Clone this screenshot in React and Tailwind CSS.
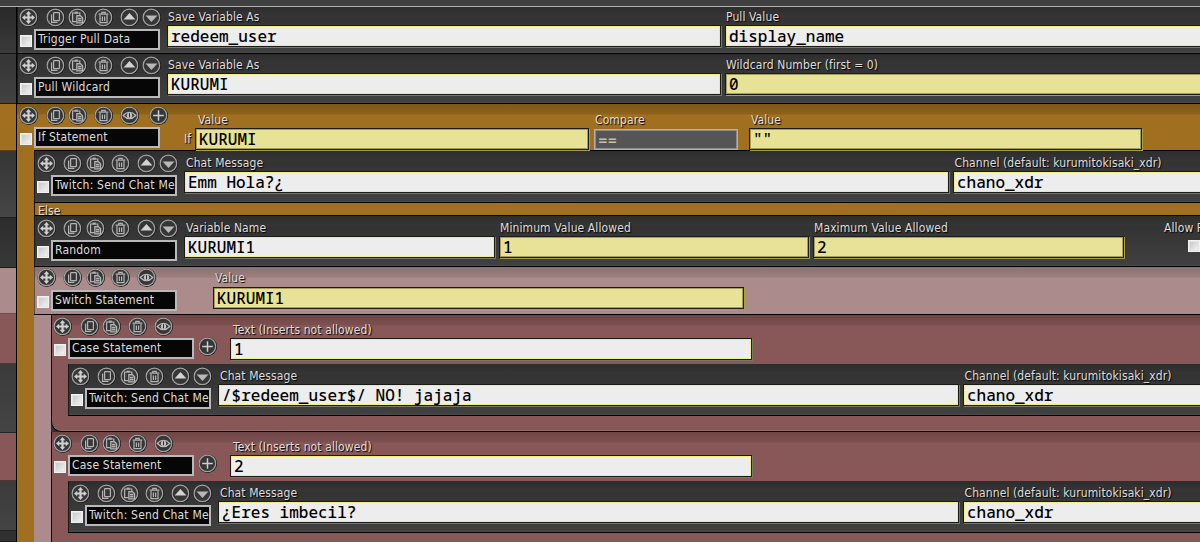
import clsx from 'clsx';

const gutter = [
  'h-[47px] bg-gradient-to-b from-[#292929] to-[#3a3a3a]',
  'h-[50px] bg-gradient-to-b from-[#353535] to-[#424242]',
  'h-[47px] bg-[#a07020]',
  'h-[67px] bg-gradient-to-b from-[#353535] to-[#464646]',
  'h-[50px] bg-gradient-to-b from-[#2c2c2c] to-[#383838]',
  'h-[46px] bg-[#ab8b8b]',
  'h-[50px] bg-[#885858]',
  'h-[69px] bg-gradient-to-b from-[#3b3b3b] to-[#444444]',
  'h-[48px] bg-[#885858]',
  'h-[50px] bg-gradient-to-b from-[#3b3b3b] to-[#444444]',
  'h-[11px] bg-[#303030]',
];

const glyphs = {
  move: (
    <path
      d="M9.5 3 12.3 6.2H10.6V8.4H12.8V6.7L16 9.5 12.8 12.3V10.6H10.6V12.8H12.3L9.5 16 6.7 12.8H8.4V10.6H6.2V12.3L3 9.5 6.2 6.7V8.4H8.4V6.2H6.7Z"
      fill="#d0d0d0"
    />
  ),
  copy: (
    <g fill="none" stroke="#b4b4b4" strokeWidth="1.2">
      <rect x="7.6" y="4.6" width="5.8" height="8" rx=".6" />
      <path d="M5.6 6.6V14.4H11.4" />
    </g>
  ),
  paste: (
    <g fill="none" stroke="#b4b4b4" strokeWidth="1.2">
      <path d="M8.4 13.6H4.6V5H11.8V7.2" />
      <path d="M6.6 4.6H9.8" strokeWidth="2" />
      <path d="M8.8 7.6H12.4L14.6 9.8V14.8H8.8Z" fill="#555" />
      <path d="M10 10.6H13.4M10 12.7H13.4" />
    </g>
  ),
  trash: (
    <g fill="none" stroke="#b4b4b4" strokeWidth="1.2">
      <path d="M4.6 6.2H14.4M7.8 6V4.4H11.2V6" />
      <path d="M6 6.8V14.6H13V6.8M8.4 8.4V13M10.6 8.4V13" />
    </g>
  ),
  up: <path d="M9.5 5 15.4 11.4H3.6Z" fill="#d2d2d2" />,
  down: <path d="M3.6 7.6H15.4L9.5 14Z" fill="#b8b8b8" />,
  eye: (
    <g>
      <path d="M3.2 9.5Q9.5 3 15.8 9.5 9.5 16 3.2 9.5Z" fill="none" stroke="#c0c0c0" strokeWidth="1.2" />
      <circle cx="9.5" cy="9.5" r="2.7" fill="#c4c4c4" />
      <path d="M9.5 7.2V11.4" stroke="#333" strokeWidth="1.1" />
    </g>
  ),
  plus: <path d="M9.5 4.2V14.8M4.2 9.5H14.8" stroke="#cfcfcf" strokeWidth="1.5" />,
};

const RoundIcon = ({ name, className }) => (
  <svg viewBox="0 0 19 19" className={clsx('h-[19px] w-[19px] shrink-0', className)}>
    <circle cx="9.7" cy="9.7" r="9.3" fill="#121212" />
    <circle cx="9.4" cy="9.4" r="8.3" fill="#363636" stroke="#a4a4a4" strokeWidth="1.2" />
    {glyphs[name]}
  </svg>
);

const Checkbox = ({ className }) => (
  <span
    className={clsx(
      'h-[12px] w-[12px] shrink-0 border border-[#f2f2f2] bg-gradient-to-br from-[#c2c6ca] to-[#f6f6f6] shadow-[inset_0_0_0_1px_#e4e4e4]',
      className,
    )}
  />
);

const Controls = ({ name, tools = 'arrows', className = 'pt-[3px]', boxGap = 'mt-[2px]', inset = 'pl-[2px]' }) => (
  <div className={clsx('flex w-[144px] shrink-0 flex-col', className)}>
    <div className={clsx('flex', inset)}>
      <RoundIcon name="move" />
      <RoundIcon name="copy" className="ml-[7.5px]" />
      <RoundIcon name="paste" className="ml-[3.5px]" />
      <RoundIcon name="trash" className="ml-[6.5px]" />
      <RoundIcon name={tools === 'arrows' ? 'up' : 'eye'} className="ml-[7px]" />
      {tools === 'arrows' && <RoundIcon name="down" className="ml-[3px]" />}
      {tools === 'eyePlus' && <RoundIcon name="plus" className="ml-[10px]" />}
    </div>
    <div className={clsx('flex pl-[3px]', boxGap)}>
      <Checkbox className="mt-[6px]" />
      <div className="ml-[2px] h-[21px] w-[126px] shrink-0 overflow-hidden border-2 border-[#b9b9b9] bg-[#060606] pl-[2px] text-[12px] leading-[16px] tracking-[0.2px] whitespace-nowrap text-[#dcdcdc]">
        {name}
      </div>
    </div>
  </div>
);

const boxStyles = {
  white: 'border-[#1c1c14] bg-[#ededed] text-black shadow-[inset_0_0_0_1px_#eeee84,1px_1px_0_#777777]',
  yellow: 'border-[#1c1c14] bg-[#e8e297] text-black shadow-[inset_0_0_0_1px_#a49e60,1px_1px_0_#a6a04c]',
  gray: 'border-[#b0b0b0] bg-[#555555] text-[#c8c0a4] shadow-[inset_0_0_0_1px_#8c8c8c]',
};

const Label = ({ children, className }) => (
  <div
    className={clsx(
      'h-[16px] text-[12px] leading-[16px] tracking-[0.1px] whitespace-nowrap text-[#dedede] [text-shadow:1px_1px_1px_#000]',
      className,
    )}
  >
    {children}
  </div>
);

const Field = ({ label, value, kind = 'white', width, className, gap = 'mt-0', labelPad = 'pl-[1px]' }) => (
  <div className={clsx('flex shrink-0 flex-col', width, className)}>
    <Label className={labelPad}>{label}</Label>
    <div
      className={clsx(
        'h-[22px] overflow-hidden border pl-[3px] font-[Noto_Sans_Mono,DejaVu_Sans_Mono,monospace] text-[16px] leading-[21px] font-medium whitespace-pre',
        boxStyles[kind],
        gap,
      )}
    >
      {value}
    </div>
  </div>
);

const darkRow =
  'border-b border-black bg-[linear-gradient(#2d2d2d,#363636_10px,#333333_11px,#414141)] shadow-[inset_1px_0_0_#191919,inset_0_-1px_0_#4a4a4a]';

const ChatRow = ({ message, messageWidth }) => (
  <div className={clsx('flex h-[52px]', darkRow)}>
    <Controls name="Twitch: Send Chat Me" inset="pl-[2.5px]" />
    <Field
      label="Chat Message"
      value={message}
      width={messageWidth}
      className="ml-[6px] pt-[4px]"
      labelPad="pl-[2px]"
    />
    <Field
      label="Channel (default: kurumitokisaki_xdr)"
      value="chano_xdr"
      width="w-[400px]"
      className="ml-[4px] pt-[4px]"
      labelPad="pl-[1.5px]"
    />
  </div>
);

const CaseBlock = ({ value, message, className }) => (
  <div
    className={clsx(
      'border-b border-l border-black bg-[#885858] bg-[linear-gradient(#6d4646,#7d5050_10px,#885858_11px)] shadow-[inset_0_-1px_0_#9a6868]',
      className,
    )}
  >
    <div className="-ml-px flex h-[49px]">
      <Controls name="Case Statement" tools="eye" className="pt-[2px]" />
      <RoundIcon name="plus" className="mt-[22px] ml-[3px]" />
      <Field
        label="Text (Inserts not allowed)"
        value={value}
        width="w-[522px]"
        className="ml-[13px] pt-[7px]"
        labelPad="pl-[3px]"
      />
    </div>
    <div className="pl-[16px]">
      <ChatRow message={message} messageWidth="w-[741px]" />
    </div>
  </div>
);

const SwitchBlock = () => (
  <div className="bg-[#ab8b8b] bg-[linear-gradient(#8b7171,#9b7f7f_10px,#ab8b8b_11px)] shadow-[inset_1px_0_0_#5e4c4c]">
    <div className="flex h-[47px]">
      <Controls name="Switch Statement" tools="eye" className="pt-[1px]" boxGap="mt-[3px]" inset="pl-[2.5px]" />
      <Field
        label="Value"
        value="KURUMI1"
        kind="yellow"
        width="w-[531px]"
        className="ml-[35px] pt-[3px]"
        gap="mt-[1px]"
        labelPad="pl-[2px]"
      />
    </div>
    <div className="border-t border-black bg-[#ab8b8b] pl-[17px]">
      <div className="bg-[#303030]">
        <CaseBlock value="1" message="/$redeem_user$/ NO! jajaja" className="h-[117px] rounded-bl-[10px]" />
        <CaseBlock value="2" message="¿Eres imbecil?" className="h-[130px]" />
      </div>
    </div>
  </div>
);

const IfBlock = () => (
  <div className="bg-[#a07020] bg-[linear-gradient(#7f5815,#8d631b_10px,#a07020_11px)]">
    <div className="flex h-[46px]">
      <Controls name="If Statement" tools="eyePlus" className="pt-[2px]" />
      <Label className="mt-[27px] ml-[23px] w-[11px]">If</Label>
      <Field label="Value" value="KURUMI" kind="yellow" width="w-[394px]" className="pt-[8px]" labelPad="pl-[3px]" />
      <Field label="Compare" value="==" kind="gray" width="w-[144px]" className="ml-[5px] pt-[8px]" gap="mt-[1px]" />
      <Field label="Value" value={'""'} kind="yellow" width="w-[393px]" className="ml-[11px] pt-[8px]" labelPad="pl-[2px]" />
    </div>
    <div className="ml-[17px] border-l border-[#1a1206]">
      <div className="-ml-px border-t border-black">
        <ChatRow message="Emm Hola?¿" messageWidth="w-[765px]" />
      </div>
      <div className="h-[13px] border-b border-black pl-[3px]">
        <Label>Else</Label>
      </div>
      <div className={clsx('-ml-px flex h-[51px]', darkRow)}>
        <Controls name="Random" inset="pl-[2.5px]" />
        <Field
          label="Variable Name"
          value="KURUMI1"
          width="w-[311px]"
          className="ml-[6px] pt-[4px]"
          labelPad="pl-[2px]"
        />
        <Field label="Minimum Value Allowed" value="1" kind="yellow" width="w-[310px]" className="ml-[4px] pt-[4px]" />
        <Field label="Maximum Value Allowed" value="2" kind="yellow" width="w-[311px]" className="ml-[4px] pt-[4px]" />
        <div className="ml-[39px] w-[70px] shrink-0 pt-[4px]">
          <Label className="pl-[1px]">Allow Repeats</Label>
          <Checkbox className="mt-[4px] ml-[25px] block" />
        </div>
      </div>
      <div className="-ml-px">
        <SwitchBlock />
      </div>
    </div>
  </div>
);

const App = () => (
  <div className="h-[542px] w-[1200px] overflow-hidden bg-[#3f3f3f] font-[DejaVu_Sans_Condensed,DejaVu_Sans,sans-serif]">
    <div className="h-[7px] border-b border-[#b0b0b0] bg-[#404040]" />
    <div className="flex">
      <div className="flex h-[535px] w-[17px] shrink-0 flex-col overflow-hidden border-r border-black">
        {gutter.map((segment, i) => (
          <div key={i} className={clsx('shrink-0 border-b border-black/40', segment)} />
        ))}
      </div>

      <div className="h-[535px] w-[1183px] overflow-hidden">
        <div className={clsx('flex h-[47px]', darkRow)}>
          <Controls name="Trigger Pull Data" className="pt-[1px]" />
          <Field label="Save Variable As" value="redeem_user" width="w-[554px]" className="ml-[6px] pt-[2px]" />
          <Field label="Pull Value" value="display_name" width="w-[500px]" className="ml-[4px] pt-[2px]" />
        </div>
        <div className={clsx('flex h-[50px]', darkRow)}>
          <Controls name="Pull Wildcard" className="pt-[2px]" />
          <Field label="Save Variable As" value="KURUMI" width="w-[554px]" className="ml-[6px] pt-[3px]" />
          <Field
            label="Wildcard Number (first = 0)"
            value="0"
            kind="yellow"
            width="w-[500px]"
            className="ml-[4px] pt-[3px]"
          />
        </div>
        <IfBlock />
      </div>
    </div>
  </div>
);

export default App;
